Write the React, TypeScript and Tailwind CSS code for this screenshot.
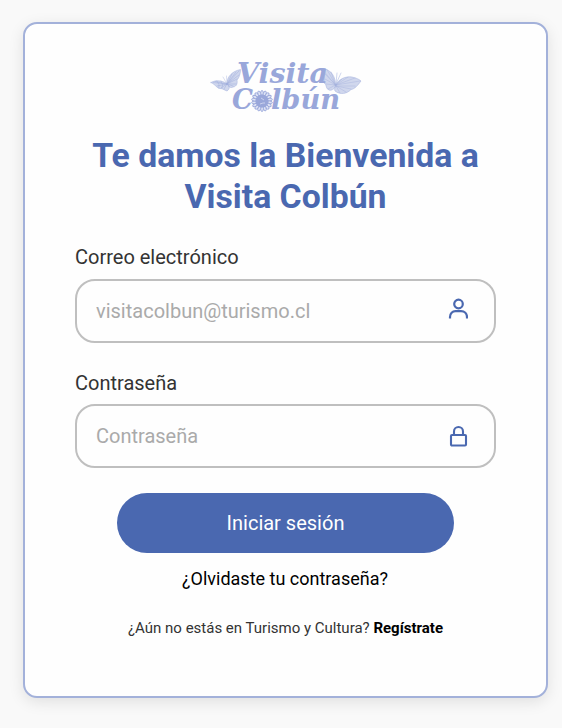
import React from 'react';

function Butterflies() {
  return (
    <g stroke="#a1afdc" strokeWidth="0.5" fill="#a1afdc" fillOpacity="0.5" strokeLinecap="round">
      {/* left butterfly */}
      <path d="M1 22.500 C5 20 11 20 17 23.500 C20 26 20 29 17 31 C14 30 13 28.500 10 28.500 C7 28.500 6 25 1 22.500Z" />
      <path d="M17 23.500 C17 16 23 11 30.500 9.500 C30.500 14 29 18 27 20 C28 25 25 27 23 27 C21 28 19 28 17 23.500Z" />
      <path d="M3 22.500 L17 24 M7 26 L17 24 M5 21.500 L17 24 M11 28 L17 24 M14 29 L17 24 M17 24 L29 11 M17 24 L26 12 M17 24 L22 14 M17 24 L29 15 M17 24 L27 19 M17 24 L26 24 M17 24 L23 26 M7 21 Q10 24 9 28 M11 21 Q14 25 12 28" fill="none" />
      <path d="M17 24 L13 17 M17 24 L16.500 16" fill="none" strokeWidth="0.4" />
      {/* right butterfly */}
      <path d="M110 8.500 C118 8 125 13 125.500 24 C126 29 121 31 119 30 C115 28 117 24 114 23 C115 17 114 12 110 8.500Z" />
      <path d="M126 25 C128 19 136 16 142 17 C146 18 149 19 151 21 C148 25 145 29 141 29.500 C137 34 130 35 125 31 C124 29 125 27 126 25Z" />
      <path d="M112 9 L125.500 25 M117 9.500 L125.500 25 M121 12 L125.500 25 M115 14 L125.500 25 M115 19 L125.500 25 M116 24 L125.500 25 M118 29 L125.500 25 M126 25 L150 21 M126 25 L145 18 M126 25 L138 17 M126 25 L132 19 M126 26 L145 26 M126 26 L141 29 M126 26 L136 32 M126 26 L130 33" fill="none" strokeWidth="0.4" />
      <path d="M126 24 L127 13 M126 24 L131 13" fill="none" strokeWidth="0.5" />
    </g>
  );
}

function Flower() {
  const petals = Array.from({ length: 18 }, (_, i) => i * 20);
  return (
    <g transform="translate(52 41)">
      {petals.map((angle) => (
        <ellipse
          key={angle}
          cx="0"
          cy="-7.700"
          rx="1.400"
          ry="2.800"
          transform={`rotate(${angle})`}
          fill="#dfe4f5"
          stroke="#99a7da"
          strokeWidth="0.9"
        />
      ))}
      <circle r="6.600" fill="#99a7da" />
      <path d="M-1 -3 L2 -1 M1 2 L-2 3 M2 1 L2 3" stroke="#dfe4f5" strokeWidth="0.7" />
    </g>
  );
}

function Logo() {
  return (
    <svg
      width="151"
      height="52"
      viewBox="0 0 151 52"
      role="img"
      aria-label="Visita Colbún"
      className="block overflow-visible font-['DejaVu_Serif_Condensed','DejaVu_Serif',serif] text-[27.500px] font-bold italic"
    >
      <Butterflies />
      <g fill="#99a7da">
        <text x="27" y="23" textLength="91" lengthAdjust="spacingAndGlyphs">Visita</text>
        <text x="22" y="49" textLength="21" lengthAdjust="spacingAndGlyphs">C</text>
        <text x="61" y="49" textLength="69" lengthAdjust="spacingAndGlyphs">lbún</text>
      </g>
      <Flower />
    </svg>
  );
}

function UserIcon() {
  return (
    <svg width="20" height="22" viewBox="0 0 20 22" fill="none" stroke="#4a68b0" strokeWidth="2.200">
      <circle cx="10.500" cy="6" r="4.300" />
      <path d="M2 20.500 V19 C2 15.500 4.500 13.200 7.500 13.200 H13 C16.500 13.200 19 15.500 19 19 V20.500" />
    </svg>
  );
}

function LockIcon() {
  return (
    <svg width="20" height="22" viewBox="0 0 20 22" fill="none" stroke="#4a68b0" strokeWidth="2.100">
      <rect x="3" y="10" width="15" height="10.500" rx="1" />
      <path d="M6 10 V6.500 C6 3.800 8 2 10.500 2 C13 2 15 3.800 15 6.500 V10" />
    </svg>
  );
}

interface FieldProps {
  id: string;
  label: string;
  type: string;
  placeholder: string;
  labelClass: string;
  icon: React.ReactNode;
}

function Field({ id, label, type, placeholder, labelClass, icon }: FieldProps) {
  return (
    <div className="flex flex-col">
      <label htmlFor={id} className={`text-[20px] leading-6 text-[#333333] ${labelClass}`}>{label}</label>
      <div className="flex h-16 items-center rounded-[20px] border-2 border-[#bfbfbf] pr-[26px] pl-[19px]">
        <input
          id={id}
          type={type}
          placeholder={placeholder}
          className="min-w-0 flex-1 bg-transparent text-[20px] leading-6 outline-none placeholder:text-[#aaaaaa]"
        />
        {icon}
      </div>
    </div>
  );
}

export default function App() {
  return (
    <div className="min-h-[728px] bg-[#f9f9f9] pt-[22px] pl-[23px] font-['Roboto',sans-serif]">
      <main className="flex h-[676px] w-[525px] flex-col rounded-[14px] border-2 border-[#a3b1da] bg-[#fefefe] px-[50px] pt-[36px] shadow-[0_4px_15px_rgba(0,0,0,0.1)]">
        <div className="flex justify-center">
          <Logo />
        </div>
        <h1 className="mt-[23px] text-center text-[33.750px] leading-[41px] font-bold text-[#4a68b0]">
          Te damos la Bienvenida a<br />Visita Colbún
        </h1>
        <form className="mt-7 flex flex-col gap-7">
          <Field id="email" label="Correo electrónico" type="email" placeholder="visitacolbun@turismo.cl" labelClass="mb-[10px]" icon={<div className="mb-[4px]"><UserIcon /></div>} />
          <Field id="password" label="Contraseña" type="password" placeholder="Contraseña" labelClass="mb-[9px]" icon={<div><LockIcon /></div>} />
        </form>
        <button type="button" className="mt-[25px] h-[60px] w-[337px] self-center rounded-full bg-[#4a68b0] text-[20px] text-white">
          Iniciar sesión
        </button>
        <a className="mt-[15px] pr-px text-center text-[18px] leading-[22px] text-black">¿Olvidaste tu contraseña?</a>
        <p className="mt-[29px] text-center text-[15px] leading-[18px] text-[#333333]">
          ¿Aún no estás en Turismo y Cultura? <a className="font-bold text-black">Regístrate</a>
        </p>
      </main>
    </div>
  );
}
